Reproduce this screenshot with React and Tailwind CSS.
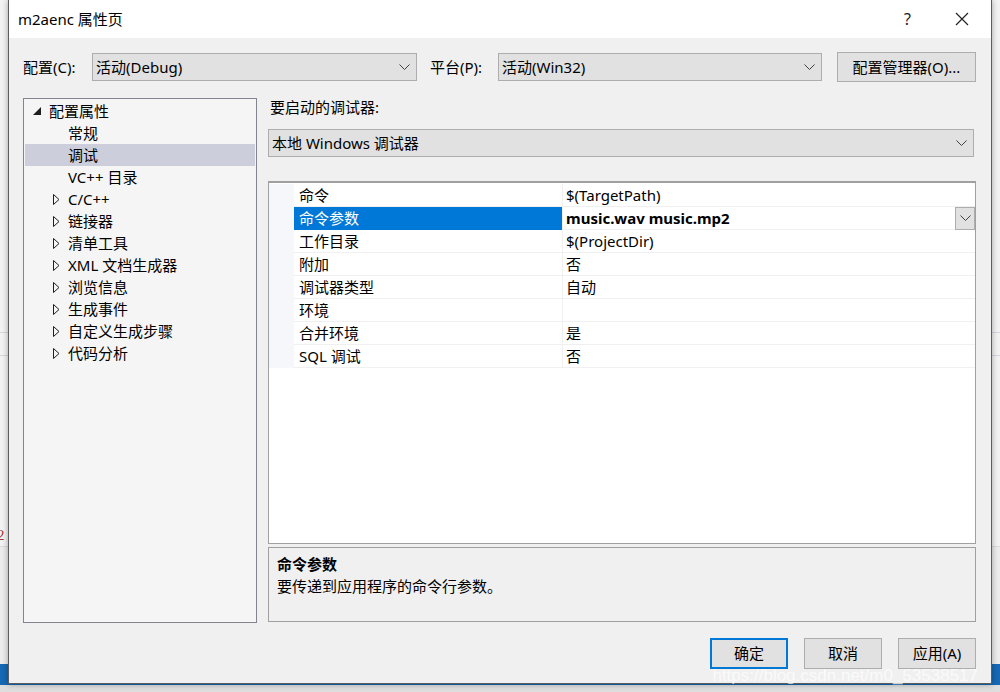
import React from 'react';

const font = { fontFamily: '"Noto Sans", "Noto Sans CJK SC", sans-serif' };

const Chevron = ({ className = '' }) => (
  <svg width="11" height="7" viewBox="0 0 11 7" className={className}>
    <polyline points="0.5,0.5 5.5,5.5 10.5,0.5" fill="none" stroke="#404040" strokeWidth="1" />
  </svg>
);

const Select = ({ value, className = '' }) => (
  <div className={`flex items-center justify-between bg-[#e1e1e1] border border-[#adadad] pl-[3px] pr-[6px] ${className}`}>
    <span className="text-[15px] text-black leading-none">{value}</span>
    <Chevron />
  </div>
);

const Button = ({ children, primary, className = '' }) => (
  <div
    className={`flex items-center justify-center bg-[#e1e1e1] text-[15px] text-black ${
      primary ? 'border-2 border-[#0078d7]' : 'border border-[#adadad]'
    } ${className}`}
  >
    {children}
  </div>
);

const treeItems = [
  { label: '配置属性', level: 0, open: true },
  { label: '常规', level: 1 },
  { label: '调试', level: 1, selected: true },
  { label: 'VC++ 目录', level: 1 },
  { label: 'C/C++', level: 1, collapsed: true },
  { label: '链接器', level: 1, collapsed: true },
  { label: '清单工具', level: 1, collapsed: true },
  { label: 'XML 文档生成器', level: 1, collapsed: true },
  { label: '浏览信息', level: 1, collapsed: true },
  { label: '生成事件', level: 1, collapsed: true },
  { label: '自定义生成步骤', level: 1, collapsed: true },
  { label: '代码分析', level: 1, collapsed: true },
];

const props = [
  { name: '命令', value: '$(TargetPath)' },
  { name: '命令参数', value: 'music.wav music.mp2', selected: true },
  { name: '工作目录', value: '$(ProjectDir)' },
  { name: '附加', value: '否' },
  { name: '调试器类型', value: '自动' },
  { name: '环境', value: '' },
  { name: '合并环境', value: '是' },
  { name: 'SQL 调试', value: '否' },
];

const TreeRow = ({ item }) => (
  <div
    className={`flex items-center h-[22px] ${item.level === 0 ? 'pl-[8px]' : 'pl-[27px]'} ${
      item.selected ? 'bg-[#cccedb]' : ''
    }`}
  >
    <div className="w-[16px] shrink-0 flex items-center">
      {item.open && (
        <svg width="8" height="8" viewBox="0 0 8 8">
          <polygon points="8,0 8,8 0,8" fill="#1e1e1e" />
        </svg>
      )}
      {item.collapsed && (
        <svg width="7" height="11" viewBox="0 0 7 11" className="ml-[1px]">
          <polygon points="0.5,0.5 6,5.5 0.5,10.5" fill="none" stroke="#1e1e1e" strokeWidth="1" />
        </svg>
      )}
    </div>
    <span className="text-[15px] text-black leading-none">{item.label}</span>
  </div>
);

const PropRow = ({ p }) => (
  <div className="flex h-[23px]">
    <div
      className={`w-[268px] shrink-0 flex items-center pl-[5px] border-b ${
        p.selected ? 'bg-[#0078d7] text-white border-[#0078d7]' : 'text-black border-[#f0f0f0]'
      }`}
    >
      <span className="text-[15px] leading-none">{p.name}</span>
    </div>
    <div className="flex-1 flex items-center justify-between border-l border-[#f0f0f0] border-b pl-[3px]">
      <span className={`text-[15px] leading-none text-black ${p.selected ? 'font-bold' : ''}`}>{p.value}</span>
      {p.selected && (
        <div className="w-[20px] h-[23px] bg-[#e1e1e1] border border-[#adadad] flex items-center justify-center">
          <Chevron />
        </div>
      )}
    </div>
  </div>
);

export default function App() {
  return (
    <div className="relative w-[1000px] h-[692px] overflow-hidden bg-[#f3f3f3]" style={font}>
      {/* desktop behind */}
      <div className="flex flex-col h-full">
        <div className="h-[664px] flex flex-col">
          <div className="h-[330px]" />
          <div className="h-[24px] border-y border-[#d6d6dc] mt-[2px]" />
          <div className="h-[190px] flex items-end">
            <span className="text-[#a33] text-[15px] ml-[-3px]" style={{ fontFamily: '"Liberation Serif", serif' }}>2</span>
          </div>
          <div className="flex-1 bg-[#ececec] border-t border-[#dcdcdc]" />
        </div>
        <div className="h-[21px] bg-[#1569b5]" />
        <div className="flex-1 bg-[#dedede]" />
      </div>

      {/* dialog window */}
      <div className="absolute left-[8px] top-0 w-[984px] h-[684px] flex flex-col bg-[#f0f0f0] border border-[#5c5c5c] border-t-0 shadow-[0_0_6px_rgba(0,0,0,0.35)]">
        {/* title bar */}
        <div className="h-[38px] bg-white flex items-center justify-between pl-[9px] pr-[22px]">
          <span className="text-[15px] text-black">m2aenc 属性页</span>
          <div className="flex items-center gap-[44px]">
            <span className="text-[16px] text-[#222]">?</span>
            <svg width="14" height="14" viewBox="0 0 14 14">
              <path d="M1 1L13 13M13 1L1 13" stroke="#222" strokeWidth="1.2" />
            </svg>
          </div>
        </div>

        {/* config row */}
        <div className="flex items-center mt-[14px] h-[30px] pl-[14px]">
          <span className="text-[15px] text-black w-[69px]">配置(C):</span>
          <Select value="活动(Debug)" className="w-[325px] h-[28px]" />
          <span className="text-[15px] text-black ml-[13px] w-[68px]">平台(P):</span>
          <Select value="活动(Win32)" className="w-[324px] h-[28px]" />
          <Button className="ml-[15px] w-[139px] h-[30px]">配置管理器(O)...</Button>
        </div>

        {/* main */}
        <div className="flex mt-[16px] pl-[14px] h-[525px]">
          {/* tree */}
          <div className="w-[234px] h-full bg-[#f5f5f5] border border-[#82848f] px-[1px] pt-[1px]">
            {treeItems.map((it) => (
              <TreeRow key={it.label} item={it} />
            ))}
          </div>

          {/* right */}
          <div className="ml-[11px] w-[708px] flex flex-col">
            <div className="h-[20px] flex items-center pl-[2px] mt-[-1px]">
              <span className="text-[15px] text-black">要启动的调试器:</span>
            </div>
            <Select value="本地 Windows 调试器" className="mt-[12px] w-[706px] h-[28px]" />

            <div className="mt-[24px] h-[363px] bg-white border border-[#a0a0a0] border-t-2 border-t-[#a0a0a0] flex pt-[1px]">
              <div className="w-[25px] bg-[#f5f7fb] h-[184px] shrink-0" />
              <div className="flex-1 flex flex-col">
                {props.map((p) => (
                  <PropRow key={p.name} p={p} />
                ))}
              </div>
            </div>

            <div className="mt-[3px] h-[75px] border border-[#a0a0a0] pl-[8px] pt-[5px]">
              <div className="text-[15px] font-bold text-black leading-[22px]">命令参数</div>
              <div className="text-[15px] text-black leading-[22px]">要传递到应用程序的命令行参数。</div>
            </div>
          </div>
        </div>

        {/* buttons */}
        <div className="flex justify-end gap-[16px] pr-[15px] mt-[15px]">
          <Button primary className="w-[78px] h-[31px]">确定</Button>
          <Button className="w-[78px] h-[31px]">取消</Button>
          <Button className="w-[78px] h-[31px]">应用(A)</Button>
        </div>
      </div>

      {/* watermark */}
      <div className="absolute right-[22px] bottom-[4px] text-[17px] text-white/70" style={{ fontFamily: '"Liberation Sans", sans-serif' }}>
        https://blog.csdn.net/m0_53538517
      </div>
    </div>
  );
}
